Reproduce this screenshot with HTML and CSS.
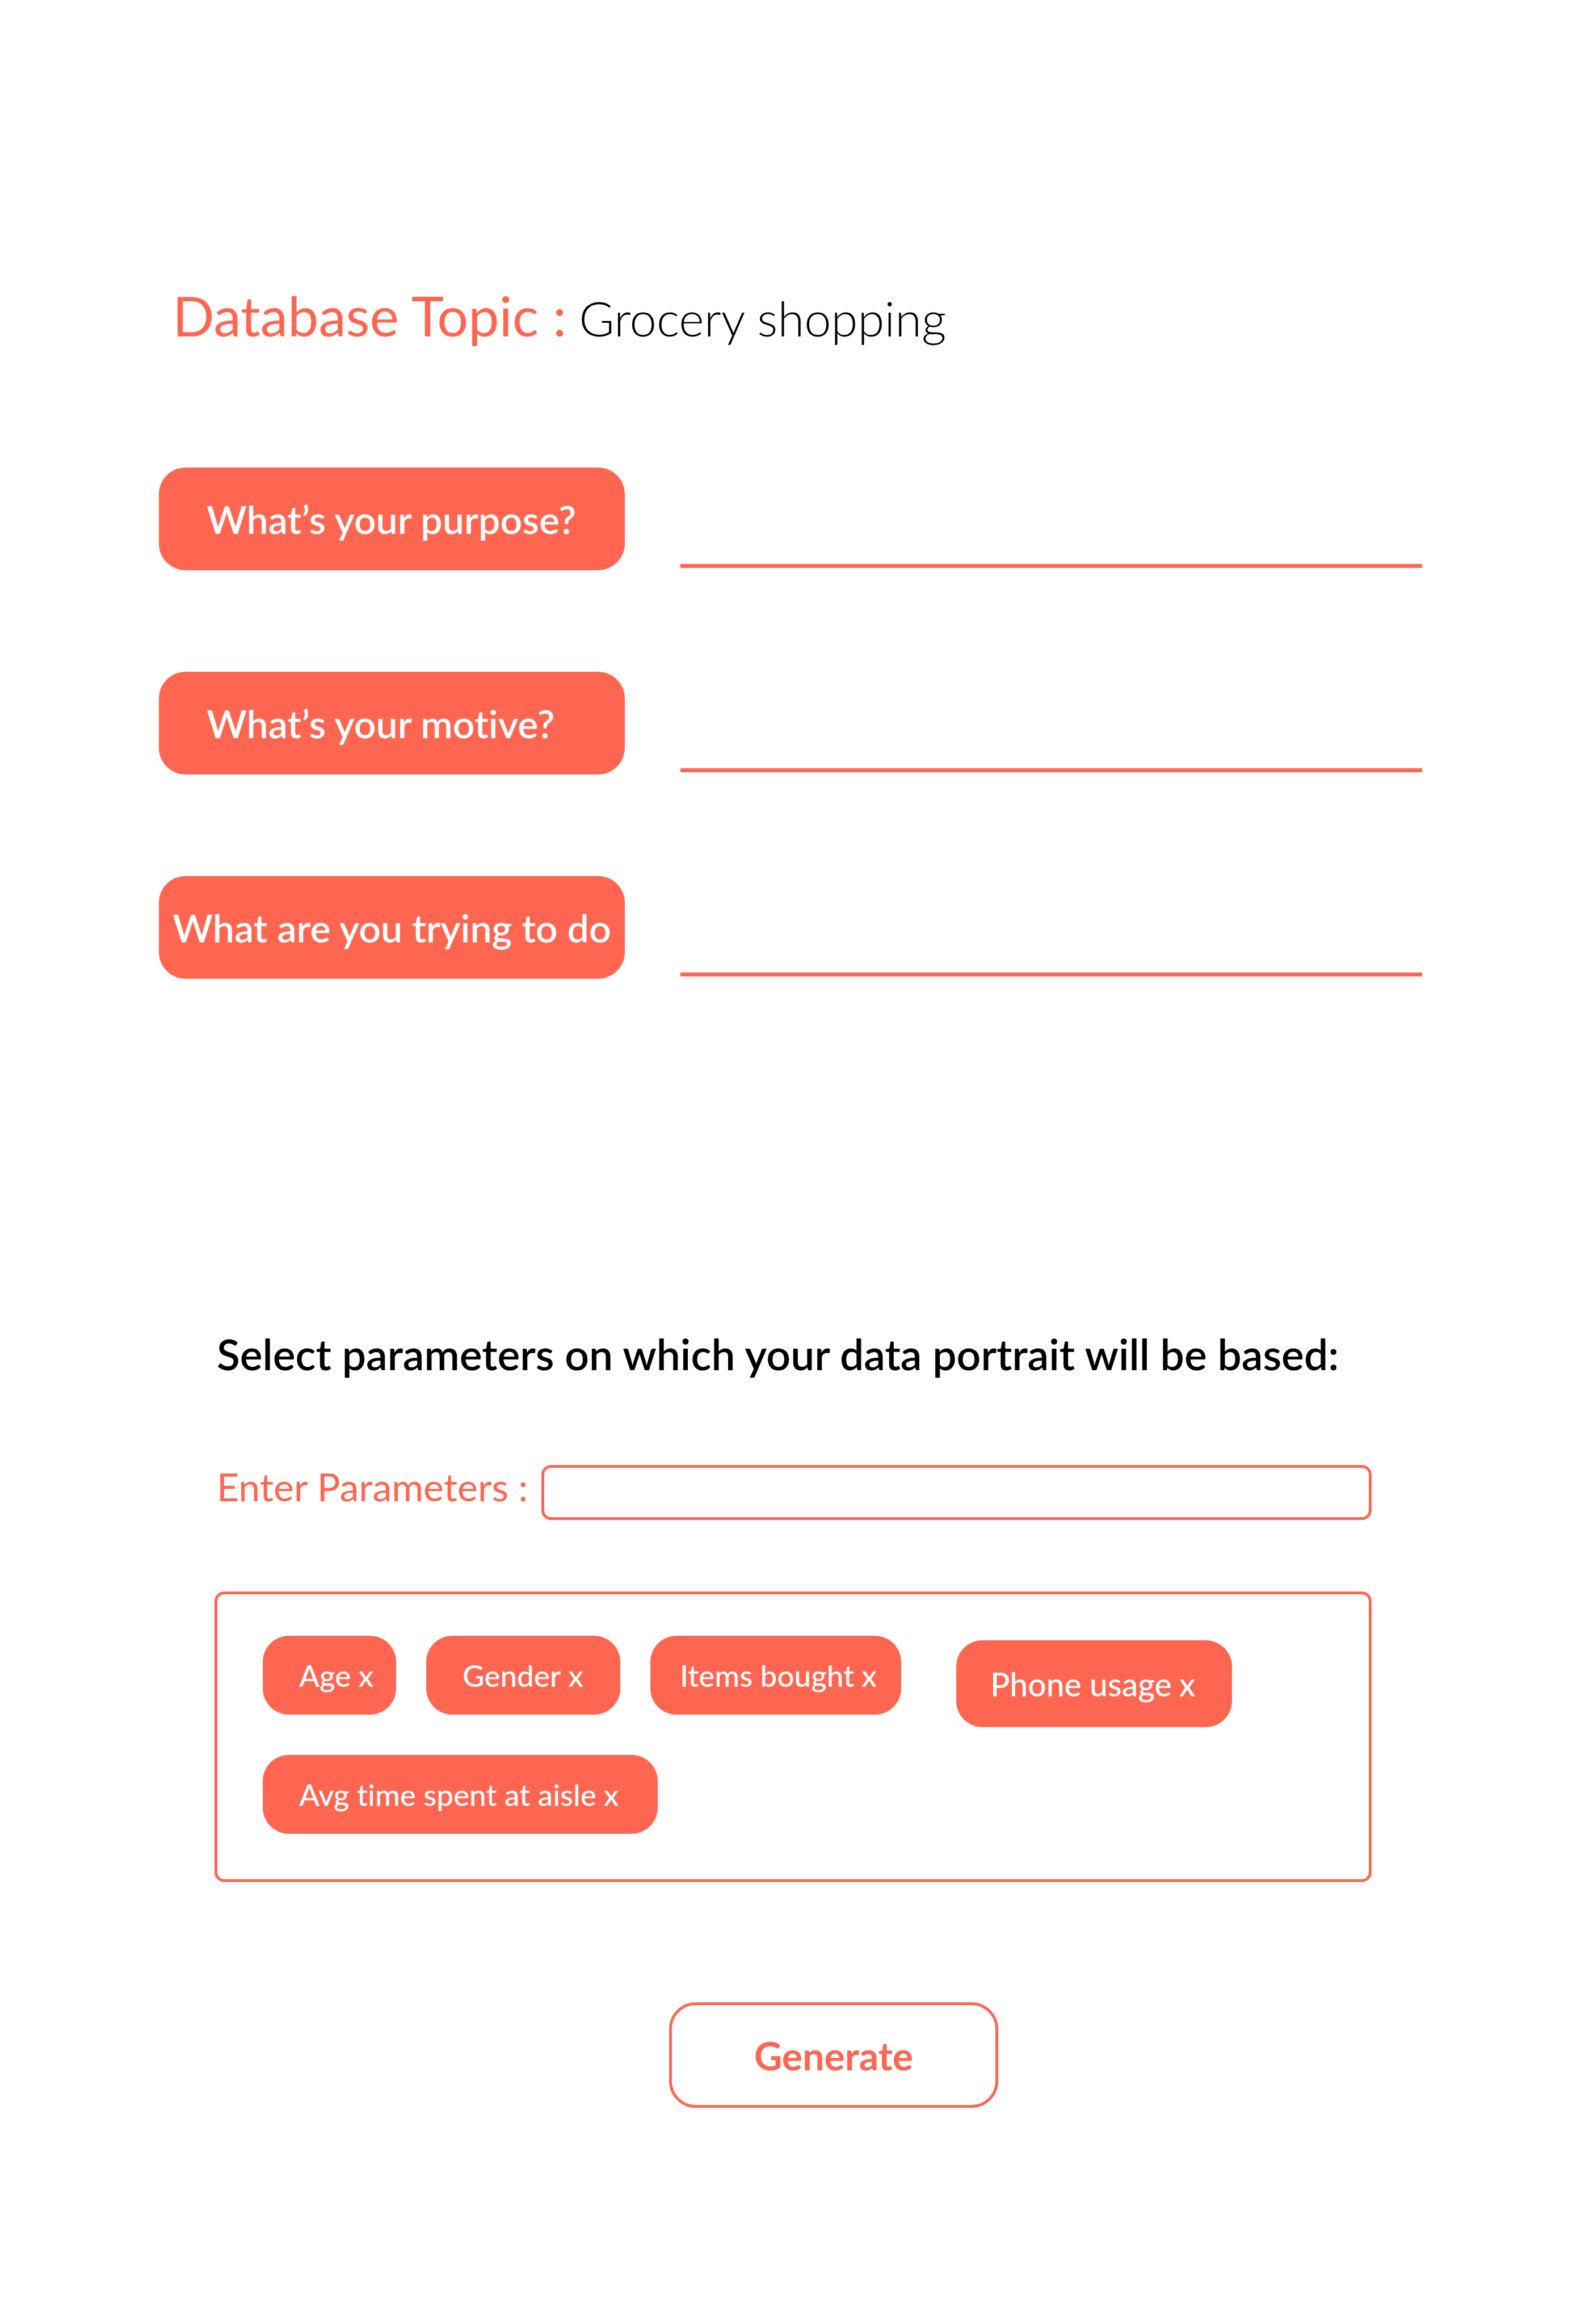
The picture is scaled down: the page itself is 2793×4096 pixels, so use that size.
FILE: index.html
```html
<!DOCTYPE html>
<html lang="en">
<head>
  <meta charset="utf-8">
  <meta name="viewport" content="width=device-width, initial-scale=1">
  <title>Database Topic</title>
  <link rel="stylesheet" href="styles.css">
</head>
<body>
  <main class="page">
    <h1 class="topic"><span class="topic-label">Database Topic :</span><span class="topic-name">Grocery shopping</span></h1>

    <form class="form">
      <div class="questions">
        <div class="question">
          <label class="question-label" for="purpose">What’s your purpose?</label>
          <input class="question-input" id="purpose" type="text">
        </div>
        <div class="question">
          <label class="question-label" for="motive">What’s your motive?</label>
          <input class="question-input" id="motive" type="text">
        </div>
        <div class="question">
          <label class="question-label question-label--full" for="goal">What are you trying to do</label>
          <input class="question-input" id="goal" type="text">
        </div>
      </div>

      <section class="parameters">
        <h2 class="heading">Select parameters on which your data portrait will be based:</h2>
        <div class="entry">
          <label class="entry-label" for="parameter">Enter Parameters :</label>
          <input class="entry-input" id="parameter" type="text">
        </div>
        <ul class="chips">
          <li class="chip chip--age">Age <button class="remove" type="button" aria-label="Remove Age">x</button></li>
          <li class="chip chip--gender">Gender <button class="remove" type="button" aria-label="Remove Gender">x</button></li>
          <li class="chip chip--items">Items bought <button class="remove" type="button" aria-label="Remove Items bought">x</button></li>
          <li class="chip chip--phone">Phone usage <button class="remove" type="button" aria-label="Remove Phone usage">x</button></li>
          <li class="chip chip--time">Avg time spent at aisle <button class="remove" type="button" aria-label="Remove Avg time spent at aisle">x</button></li>
        </ul>
        <button class="generate" type="submit">Generate</button>
      </section>
    </form>
  </main>
</body>
</html>
```
FILE: styles.css
```css
:root {
  --coral: #ff6652;
}

* {
  box-sizing: border-box;
}

body {
  margin: 0;
  background: #fff;
  color: #000;
  font-family: Lato, "Open Sans", sans-serif;
  font-variant-ligatures: none;
}

input,
button {
  margin: 0;
  padding: 0;
  font: inherit;
  color: inherit;
  background: none;
  border: 0;
}

.page {
  padding: 496px 287px 380px 280px;
}

.topic {
  display: flex;
  align-items: baseline;
  gap: 22px;
  height: 120px;
  margin: 0 0 208px;
  padding-left: 24px;
  line-height: 120px;
  white-space: nowrap;
}

.topic-label {
  color: var(--coral);
  font-size: 97px;
  font-weight: 400;
}

.topic-name {
  font-size: 85px;
  font-weight: 300;
}

.questions {
  display: grid;
  gap: 179px;
}

.question {
  display: grid;
  grid-template-columns: 821px 1fr;
  gap: 98px;
}

.question-label {
  display: flex;
  align-items: center;
  height: 181px;
  padding-left: 84px;
  border-radius: 47px;
  background: var(--coral);
  color: #fff;
  font-size: 68px;
  font-weight: 600;
  white-space: nowrap;
}

.question-label--full {
  justify-content: center;
  padding-left: 0;
}

.question-input {
  width: 100%;
  height: 177px;
  border-bottom: 7px solid var(--coral);
  font-size: 68px;
}

.parameters {
  margin: 611px 89px 0 98px;
}

.heading {
  margin: 0 0 146px;
  padding-left: 4px;
  font-size: 75px;
  font-weight: 600;
  line-height: 100px;
  white-space: nowrap;
}

.entry {
  display: flex;
  align-items: flex-start;
  height: 97px;
  padding-left: 4px;
}

.entry-label {
  flex: 0 0 572px;
  color: var(--coral);
  font-size: 68px;
  line-height: 75px;
  white-space: nowrap;
}

.entry-input {
  flex: 1;
  height: 97px;
  padding: 0 24px;
  border: 5px solid var(--coral);
  border-radius: 17px;
  font-size: 53px;
}

.chips {
  display: flex;
  flex-wrap: wrap;
  align-content: flex-start;
  align-items: flex-start;
  gap: 49px 53px;
  min-height: 512px;
  margin: 126px 0 212px;
  padding: 73px 80px;
  border: 5px solid var(--coral);
  border-radius: 17px;
  list-style: none;
}

.chip {
  display: flex;
  align-items: center;
  gap: 13px;
  height: 139px;
  padding-left: 64px;
  border-radius: 46px;
  background: var(--coral);
  color: #fff;
  font-size: 53px;
  font-weight: 500;
  white-space: nowrap;
}

.chip--age {
  width: 235px;
}

.chip--gender {
  width: 342px;
}

.chip--items {
  width: 442px;
  padding-left: 52px;
}

.chip--phone {
  width: 486px;
  height: 153px;
  margin: 8px 0 0 44px;
  padding-left: 60px;
  font-size: 57px;
}

.chip--time {
  width: 696px;
}

.generate {
  display: block;
  width: 580px;
  height: 186px;
  margin-left: 801px;
  border: 5px solid var(--coral);
  border-radius: 47px;
  color: var(--coral);
  font-size: 68px;
  font-weight: 700;
}
```
